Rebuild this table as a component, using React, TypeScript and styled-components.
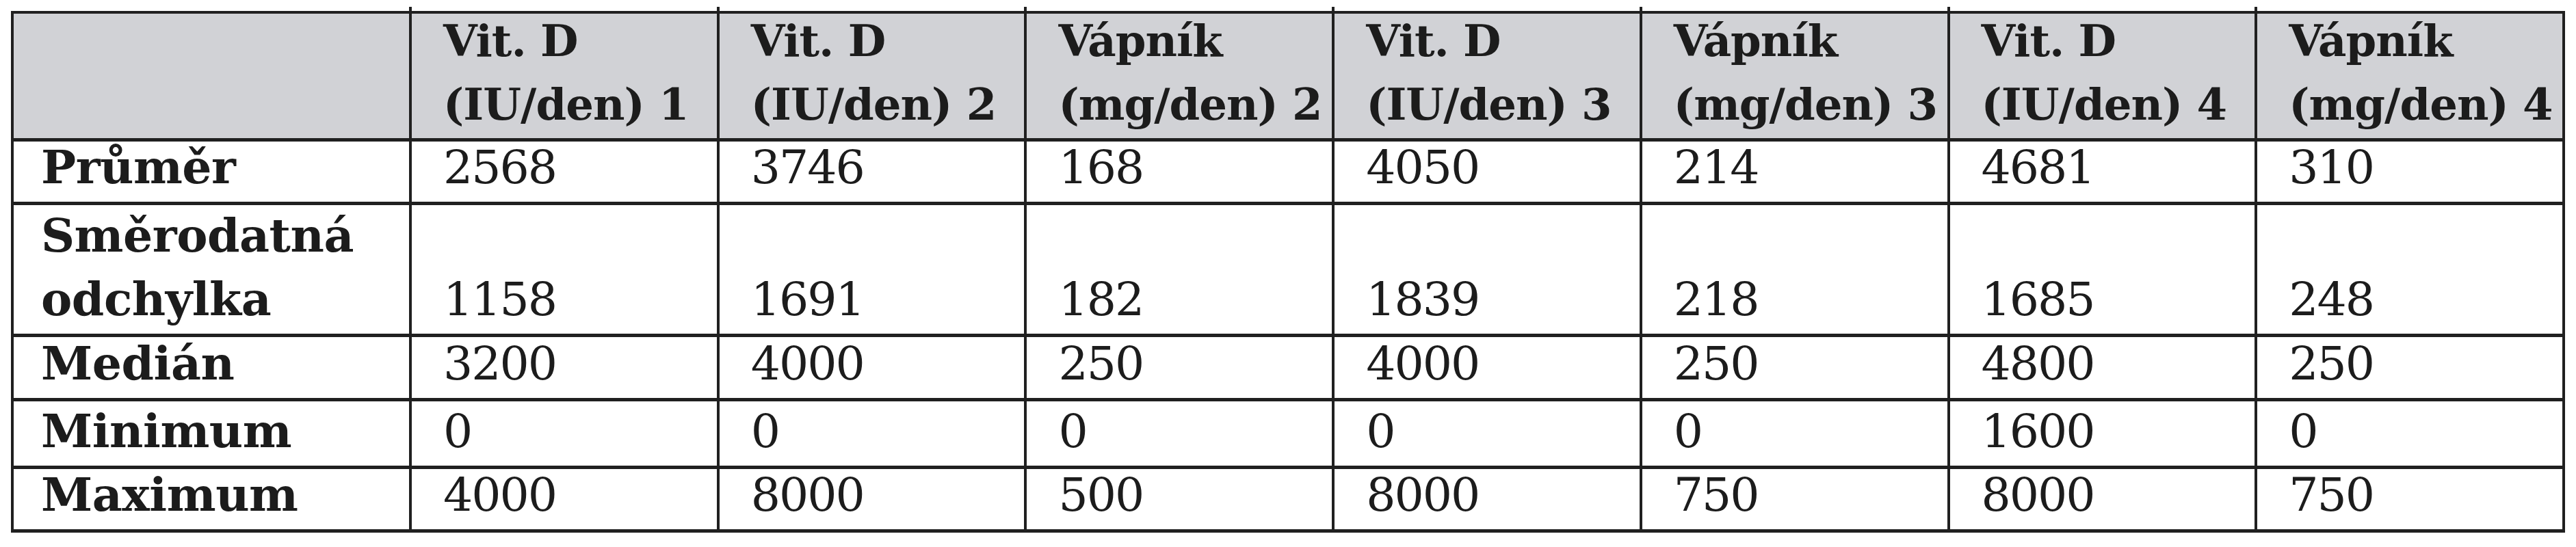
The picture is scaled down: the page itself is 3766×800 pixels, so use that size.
import { Fragment } from 'react';

import styled, { createGlobalStyle } from 'styled-components';

const headers = [
  ['Vit. D', '(IU/den) 1'],
  ['Vit. D', '(IU/den) 2'],
  ['Vápník', '(mg/den) 2'],
  ['Vit. D', '(IU/den) 3'],
  ['Vápník', '(mg/den) 3'],
  ['Vit. D', '(IU/den) 4'],
  ['Vápník', '(mg/den) 4'],
];

const rows = [
  { label: 'Průměr', values: ['2568', '3746', '168', '4050', '214', '4681', '310'] },
  { label: 'Směrodatná odchylka', values: ['1158', '1691', '182', '1839', '218', '1685', '248'] },
  { label: 'Medián', values: ['3200', '4000', '250', '4000', '250', '4800', '250'] },
  { label: 'Minimum', values: ['0', '0', '0', '0', '0', '1600', '0'] },
  { label: 'Maximum', values: ['4000', '8000', '500', '8000', '750', '8000', '750'] },
];

function App() {
  return (
    <>
      <GlobalStyle />
      <Page>
        <Table>
          <HeadCell />
          {headers.map(([top, bottom], i) => (
            <HeadCell key={i}>
              <Line>{top}</Line>
              <Line>{bottom}</Line>
            </HeadCell>
          ))}
          {rows.map((row) => (
            <Fragment key={row.label}>
              <LabelCell>{row.label}</LabelCell>
              {row.values.map((value, i) => (
                <ValueCell key={i}>{value}</ValueCell>
              ))}
            </Fragment>
          ))}
        </Table>
      </Page>
    </>
  );
}

export default App;

const GlobalStyle = createGlobalStyle`
  html, body {
    margin: 0;
    padding: 0;
    background: #ffffff;
  }
`;

const Page = styled.div`
  width: 3766px;
  height: 800px;
  padding: 16px 0 0 16px;
  box-sizing: border-box;
  background: #ffffff;
`;

const Table = styled.div`
  display: grid;
  grid-template-columns: 582px repeat(7, 1fr);
  grid-template-rows: 187px 93px 193px 94px 99px 93px;
  width: 3734px;
  box-sizing: border-box;
  border-top: 4px solid #202020;
  border-left: 4px solid #202020;
  font-family: 'DejaVu Serif', 'Liberation Serif', serif;
  font-size: 64px;
  line-height: 93px;
  color: #1c1c1c;
`;

const Cell = styled.div`
  position: relative;
  display: flex;
  flex-direction: column;
  justify-content: flex-end;
  box-sizing: border-box;
  padding: 0 0 3px 46px;
  border-right: 4px solid #202020;
  border-bottom: 5px solid #202020;
  white-space: nowrap;
`;

const HeadCell = styled(Cell)`
  background: #d1d2d6;
  font-weight: bold;
  letter-spacing: -1px;

  /* column rules poke a little above the top border */
  &::before {
    content: '';
    position: absolute;
    top: -10px;
    right: -4px;
    width: 4px;
    height: 10px;
    background: #202020;
  }

  &:nth-child(8)::before {
    display: none;
  }
`;

const Line = styled.span`
  display: block;
`;

const LabelCell = styled(Cell)`
  padding: 0 0 4px 40px;
  font-size: 68px;
  font-weight: bold;
  letter-spacing: -0.5px;
  white-space: normal;
`;

const ValueCell = styled(Cell)`
  padding: 0 0 4px 46px;
  font-size: 68px;
  font-weight: normal;
  letter-spacing: -2px;
`;
